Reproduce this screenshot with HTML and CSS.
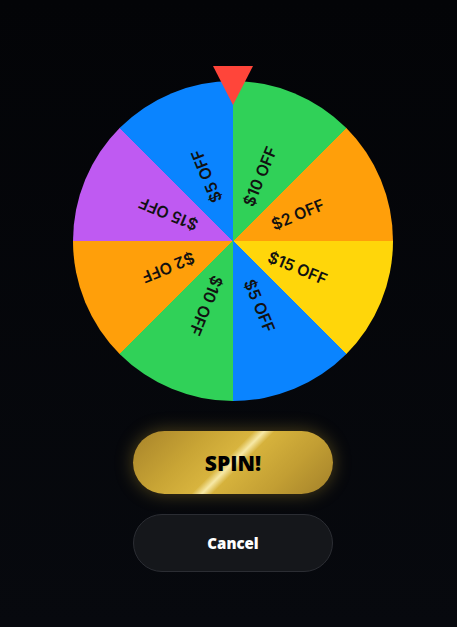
FILE: index.html
```html
<!DOCTYPE html>
<html lang="en">
<head>
    <meta charset="UTF-8">
    <meta name="viewport" content="width=device-width, initial-scale=1.0">
    <title>Spin the Wheel</title>
    <link rel="stylesheet" href="styles.css">
</head>
<body>

    <div class="spin-container">
        <div class="wheel-wrap">
            <div class="pointer"></div>
            <div class="wheel">
                <span class="label" style="transform: rotate(-67.5deg)">$10 OFF</span>
                <span class="label" style="transform: rotate(-22.5deg)">$2 OFF</span>
                <span class="label" style="transform: rotate(22.5deg)">$15 OFF</span>
                <span class="label" style="transform: rotate(67.5deg)">$5 OFF</span>
                <span class="label" style="transform: rotate(112.5deg)">$10 OFF</span>
                <span class="label" style="transform: rotate(157.5deg)">$2 OFF</span>
                <span class="label" style="transform: rotate(202.5deg)">$15 OFF</span>
                <span class="label" style="transform: rotate(247.5deg)">$5 OFF</span>
            </div>
        </div>

        <button class="btn spin-btn">SPIN!</button>
        <button class="btn cancel-btn">Cancel</button>
    </div>

</body>
</html>
```
FILE: styles.css
```css
body {
    margin: 0;
    min-height: 627px;
    padding-left: 9px;
    background: linear-gradient(180deg, #030407 0%, #07090e 100%);
    font-family: "Open Sans", Arial, sans-serif;
}
.spin-container {
    display: flex;
    flex-direction: column;
    align-items: center;
    padding-top: 81px;
}
.wheel-wrap {
    position: relative;
    width: 320px;
    height: 320px;
}
.wheel {
    position: relative;
    width: 320px;
    height: 320px;
    border-radius: 50%;
    overflow: hidden;
    background: conic-gradient(
        #30d158 0deg 45deg,
        #ff9f0a 45deg 90deg,
        #ffd60a 90deg 135deg,
        #0a84ff 135deg 180deg,
        #30d158 180deg 225deg,
        #ff9f0a 225deg 270deg,
        #bf5af2 270deg 315deg,
        #0a84ff 315deg 360deg
    );
}
.label {
    position: absolute;
    left: 50%;
    top: 50%;
    width: 140px;
    height: 20px;
    margin-top: -10px;
    line-height: 20px;
    text-align: center;
    transform-origin: 0 50%;
    font-family: Inter, "Noto Sans", sans-serif;
    font-size: 16px;
    font-weight: 600;
    color: #111;
}
.pointer {
    position: absolute;
    left: 140px;
    top: -15px;
    width: 0;
    height: 0;
    border-left: 20px solid transparent;
    border-right: 20px solid transparent;
    border-top: 39px solid #ff453a;
    z-index: 2;
}
.btn {
    width: 200px;
    border-radius: 32px;
    font-family: "Open Sans", Arial, sans-serif;
    cursor: pointer;
}
.spin-btn {
    height: 63px;
    margin-top: 30px;
    border: none;
    color: #000;
    font-size: 21px;
    font-weight: 800;
    background: linear-gradient(135deg, #a7832a 0%, #c9a535 30%, #d8b43e 46%, #f7e9a6 50%, #d6b23c 54%, #c29e33 75%, #a3812a 100%);
    box-shadow: 0 0 18px rgba(212, 175, 55, 0.35);
}
.cancel-btn {
    height: 58px;
    margin-top: 20px;
    border: 1px solid #2b2d33;
    background-color: #15171b;
    color: #fff;
    font-size: 15px;
    font-weight: 800;
}
```
